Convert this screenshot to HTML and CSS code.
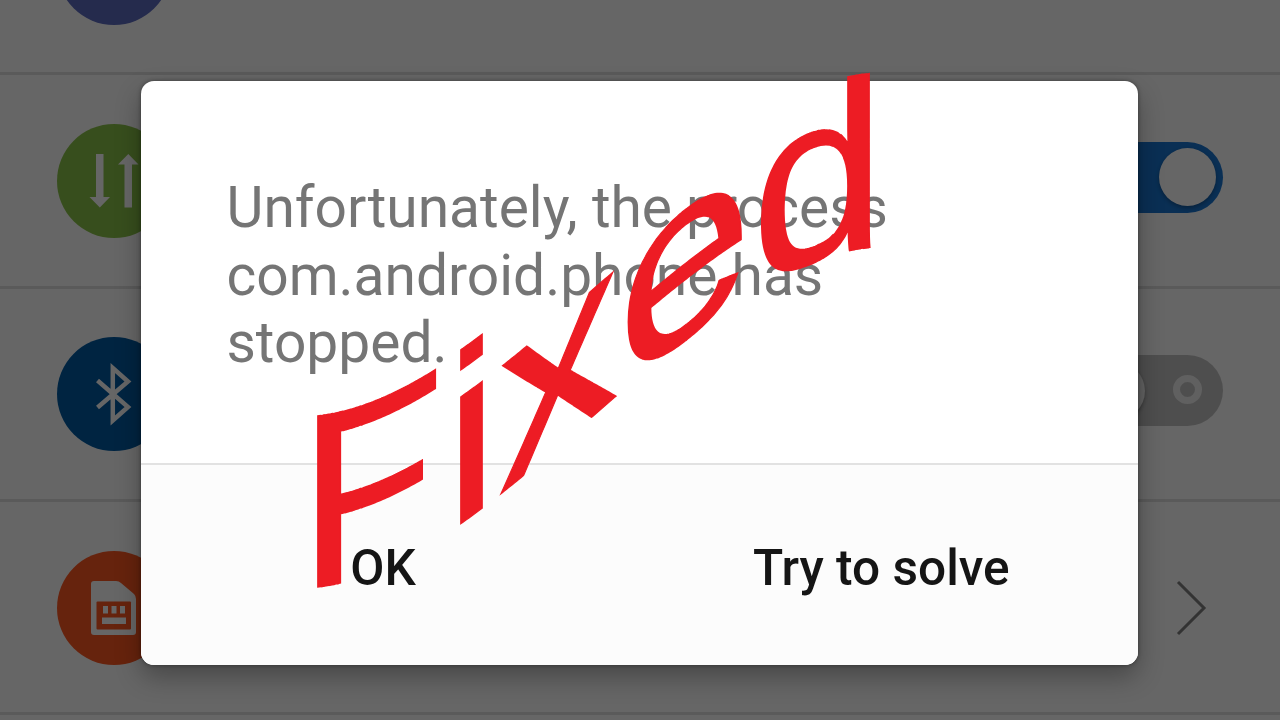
FILE: index.html
```html
<!DOCTYPE html>
<html lang="en">
<head>
    <meta charset="UTF-8">
    <meta name="viewport" content="width=device-width, initial-scale=1.0">
    <title>Settings</title>
    <link rel="stylesheet" href="styles.css">
</head>
<body>

<div class="screen">
    <div class="settings">
        <div class="row">
            <div class="icon indigo"></div>
        </div>
        <div class="row">
            <div class="icon green">
                <svg width="114" height="114" viewBox="0 0 114 114">
                    <path d="M39 30h7.500v43h6.500l-10.200 10.500-10.300-10.500h6.500z M67.500 83.500v-43h-6.500l10.300-10.500 10.200 10.500h-6.500v43z" fill="#fff"/>
                </svg>
            </div>
            <div class="toggle on"><span class="knob"></span></div>
        </div>
        <div class="row">
            <div class="icon blue">
                <svg width="114" height="114" viewBox="0 0 114 114">
                    <path d="M40.500 43.500L71 70 55.800 83.500V31L71 44.500 40.500 70.500" fill="none" stroke="#fff" stroke-width="4.500"/>
                </svg>
            </div>
            <div class="toggle off"><span class="knob"></span><span class="ring"></span></div>
        </div>
        <div class="row">
            <div class="icon orange">
                <svg width="114" height="114" viewBox="0 0 114 114">
                    <path d="M37 30h22q3 0 5 2l13 11q2 2 2 5v33q0 3-3 3H37q-3 0-3-3V33q0-3 3-3z" fill="#fff"/>
                    <rect x="39.500" y="50.500" width="34.500" height="28" rx="1" fill="#ff5722"/>
                    <path d="M46 55h5v7.500h-5z M54.500 55h5v7.500h-5z M63 55h5v7.500h-5z M45 66.500h24v6.500H45z" fill="#fff"/>
                </svg>
            </div>
            <svg class="chevron" width="32" height="58" viewBox="0 0 32 58">
                <path d="M3 3l26 26L3 55" fill="none" stroke="#808080" stroke-width="3"/>
            </svg>
        </div>
        <div class="row"></div>
    </div>

    <div class="scrim">
        <div class="dialog">
            <p class="message">Unfortunately, the process com.android.phone has stopped.</p>
            <div class="actions">
                <button class="action">OK</button>
                <button class="action solve">Try to solve</button>
            </div>
        </div>
    </div>

    <svg class="stamp" id="stamp" width="1280" height="720">
        <svg id="middle">
            <g id="middleSkew"><text id="word" class="word" x="298.300" y="0">Fixed</text></g>
        </svg>
    </svg>
</div>

<script src="script.js"></script>
</body>
</html>
```
FILE: styles.css
```css
* {
    box-sizing: border-box;
}
body {
    margin: 0;
    font-family: Roboto, "Liberation Sans", sans-serif;
    background: #fff;
}
.screen {
    position: relative;
    width: 1280px;
    height: 720px;
    overflow: hidden;
}
.settings {
    margin-top: -138px;
}
.row {
    display: flex;
    align-items: center;
    justify-content: space-between;
    height: 213.3px;
    padding: 1px 57px 0 57px;
    border-bottom: 3px solid #e0e0e0;
}
.icon {
    width: 114px;
    height: 114px;
    border-radius: 50%;
}
.icon svg {
    display: block;
}
.indigo {
    background: #5c6bc0;
}
.green {
    background: #8bc34a;
}
.blue {
    background: #005ba4;
}
.orange {
    background: #ff5722;
}
.toggle {
    display: flex;
    align-items: center;
    justify-content: space-between;
    width: 142px;
    height: 71px;
    margin-bottom: 7px;
    padding: 0 7px;
    border-radius: 36px;
}
.on {
    justify-content: flex-end;
    background: #1976d2;
}
.off {
    padding-right: 21px;
    background: #c4c4c4;
}
.knob {
    width: 57px;
    height: 58px;
    border-radius: 50%;
    background: #fff;
    box-shadow: 0 2px 4px rgba(0, 0, 0, 0.3);
}
.off .knob {
    background: #f4f4f4;
}
.ring {
    width: 29px;
    height: 29px;
    margin-bottom: 3px;
    border: 7px solid #f0f0f0;
    border-radius: 50%;
}
.chevron {
    margin-right: 16px;
}

.scrim {
    position: absolute;
    inset: 0;
    padding: 81px 142px 55.5px 140.5px;
    background: rgba(0, 0, 0, 0.6);
}
.dialog {
    display: flex;
    flex-direction: column;
    height: 100%;
    border-radius: 13px;
    background: #fff;
    box-shadow: 0 12px 26px rgba(0, 0, 0, 0.3), 0 0 4px rgba(0, 0, 0, 0.4);
    overflow: hidden;
}
.message {
    flex: 1;
    margin: 0;
    padding: 93px 200px 0 86px;
    font-size: 56.9px;
    line-height: 67.5px;
    color: #757575;
}
.actions {
    display: flex;
    height: 202px;
    border-top: 2px solid #e2e2e2;
    background: #fcfcfc;
}
.action {
    flex: 1;
    padding: 6px 13px 0 0;
    border: none;
    background: none;
    font-family: inherit;
    font-size: 49.6px;
    font-weight: 500;
    color: #151515;
}
.solve {
    padding-right: 14px;
}

/* lettering that runs uphill across the dialog */
.stamp {
    position: absolute;
    top: 0;
    left: 0;
    pointer-events: none;
}
.word {
    font-family: "Liberation Sans", Arial, sans-serif;
    font-size: 240px;
    fill: #ed1c24;
    stroke: #ed1c24;
    stroke-width: 1.6px;
}
```
FILE: script.js
```js
const SVG = "http://www.w3.org/2000/svg";
const left = 297;
const width = 589;
const bottom = 588.2;
const rise = 341.5;
const step = 2;
const barEnd = 423;
const capitalEnd = 445;

// baseline of the word at x
function baseline(x) {
    const t = Math.min(1, Math.max(0, (x - left) / width));
    return bottom - rise * t * t * (3 - 2 * t);
}

function skew(x) {
    const a = baseline(x);
    const b = baseline(x + step);
    const m = (b - a) / step;
    // the capital is a little taller than the rest
    const tall = x < capitalEnd ? 1.035 : 1;
    return `matrix(1 ${m} 0 ${tall} 0 ${a - m * x})`;
}

function placeStrip(strip, x) {
    // the lower arm of the F is shorter than the upper one
    const height = x >= barEnd && x < capitalEnd ? 425 : 720;
    strip.setAttribute("x", x);
    strip.setAttribute("y", 0);
    strip.setAttribute("width", step);
    strip.setAttribute("height", height);
    strip.setAttribute("viewBox", `${x} 0 ${step} ${height}`);
}

const stamp = document.getElementById("stamp");
const middle = 591;

for (let x = left; x < left + width; x += step) {
    if (x === middle) {
        placeStrip(document.getElementById("middle"), x);
        document.getElementById("middleSkew").setAttribute("transform", skew(x));
        continue;
    }
    const strip = document.createElementNS(SVG, "svg");
    placeStrip(strip, x);
    const use = document.createElementNS(SVG, "use");
    use.setAttribute("href", "#word");
    use.setAttribute("transform", skew(x));
    strip.appendChild(use);
    stamp.appendChild(strip);
}
```
